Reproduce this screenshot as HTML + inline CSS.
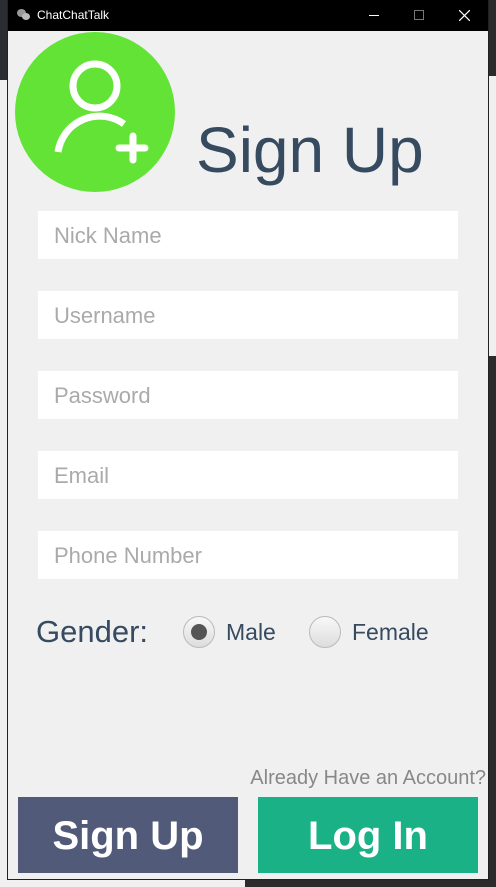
<!DOCTYPE html>
<html><head><meta charset="utf-8"><style>
*{margin:0;padding:0;box-sizing:border-box}
body{width:496px;height:887px;overflow:hidden;position:relative;background:#f0f0f0;font-family:"Liberation Sans",sans-serif}
.abs{position:absolute}
.inp{position:absolute;left:38px;width:420px;height:48px;background:#fff;color:#aaa;font-size:22px;line-height:50px;padding-left:16px}
.btn{position:absolute;top:797px;width:220px;height:76px;color:#fff;font-weight:bold;font-size:40px;line-height:78px;text-align:center}
</style></head><body>
<div class="abs" style="left:0;top:0;width:8px;height:80px;background:#2b2d33"></div>
<div class="abs" style="left:488px;top:0;width:8px;height:887px;background:#2b2b2b"></div>
<div class="abs" style="left:488px;top:76px;width:8px;height:280px;background:#f0f0f0"></div>
<div class="abs" style="left:245px;top:880px;width:251px;height:7px;background:#2b2b2b"></div>
<div class="abs" style="left:7px;top:0;width:482px;height:880px;border:1px solid #222;background:#f0f0f0"></div>
<div class="abs" style="left:8px;top:0;width:480px;height:31px;background:#000;color:#fff;font-size:12px;line-height:31px">
  <div class="abs" style="left:9px;top:9px;width:9px;height:8px;border-radius:50%;background:#999"></div>
  <div class="abs" style="left:14px;top:13px;width:8px;height:7px;border-radius:50%;background:#bbb"></div>
  <span style="position:absolute;left:29px">ChatChatTalk</span>
  <div class="abs" style="left:361px;top:15px;width:10px;height:1px;background:#fff"></div>
  <div class="abs" style="left:406px;top:10px;width:10px;height:10px;border:1px solid #777"></div>
  <svg class="abs" style="left:451px;top:10px" width="11" height="11"><path d="M0 0L11 11M11 0L0 11" stroke="#fff" stroke-width="1.2"/></svg>
</div>
<svg class="abs" style="left:15px;top:32px" width="161" height="161" viewBox="0 0 161 161">
  <circle cx="80" cy="80" r="80" fill="#62e335"/>
  <circle cx="80" cy="54" r="22" fill="none" stroke="#fff" stroke-width="7"/>
  <path d="M43 120 A42 42 0 0 1 109 92" fill="none" stroke="#fff" stroke-width="7"/>
  <path d="M118 104 V128 M104 116 H130" stroke="#fff" stroke-width="7" stroke-linecap="round"/>
</svg>
<div class="abs" style="left:196px;top:114px;font-size:64px;color:#364a60;line-height:72px">Sign Up</div>
<div class="inp" style="top:211px">Nick Name</div>
<div class="inp" style="top:291px">Username</div>
<div class="inp" style="top:371px">Password</div>
<div class="inp" style="top:451px">Email</div>
<div class="inp" style="top:531px">Phone Number</div>
<div class="abs" style="left:36px;top:614px;font-size:31px;color:#364a60">Gender:</div>
<div class="abs" style="left:183px;top:616px;width:32px;height:32px;border-radius:50%;border:1px solid #bbb;background:linear-gradient(#f8f8f8,#ddd)"><div style="position:absolute;left:7px;top:7px;width:16px;height:16px;border-radius:50%;background:#555"></div></div>
<div class="abs" style="left:226px;top:619px;font-size:23px;color:#364a60">Male</div>
<div class="abs" style="left:309px;top:616px;width:32px;height:32px;border-radius:50%;border:1px solid #bbb;background:linear-gradient(#f8f8f8,#ddd)"></div>
<div class="abs" style="left:352px;top:619px;font-size:23px;color:#364a60">Female</div>
<div class="abs" style="right:10px;top:767px;font-size:20px;color:#888">Already Have an Account?</div>
<div class="btn" style="left:18px;background:#525a7a">Sign Up</div>
<div class="btn" style="left:258px;background:#1bb187">Log In</div>
</body></html>
